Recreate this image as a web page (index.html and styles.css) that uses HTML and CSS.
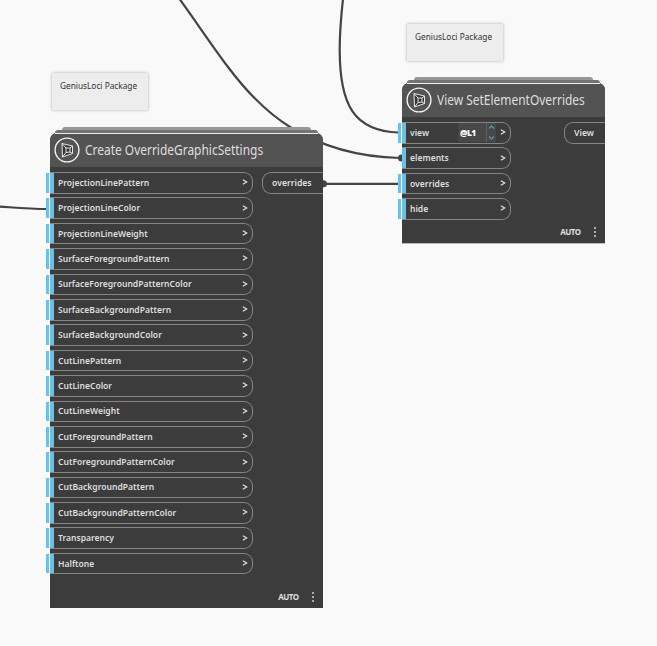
FILE: index.html
```
<!DOCTYPE html>
<html lang="en">
<head>
<meta charset="utf-8">
<title>Graph workspace</title>
<link rel="stylesheet" href="styles.css">
</head>
<body>
<main class="canvas">
<svg class="wires" width="657" height="646" viewBox="0 0 657 646">
<path d="M179.500 -1C195 20 212 46 228 67C246 91 266 112 290 127C322 147 358 157 400 158"/>
<path d="M343 -1C341 17 339.7 33 339.7 50C339.7 105 354 131 399 132.500"/>
<path d="M-1 206.500C14 207.500 29 209 47 209"/>
<path d="M324 183.800H399"/>
<circle cx="323.500" cy="183.800" r="3.500"/>
<circle cx="401.500" cy="158" r="3.500"/>
</svg>
<aside class="note note-left"><span>GeniusLoci Package</span></aside>
<aside class="note note-right"><span>GeniusLoci Package</span></aside>

<section class="node settings">
<header><svg class="logo" viewBox="0 0 26 26"><use href="#package"/></svg><h2>Create OverrideGraphicSettings</h2></header>
<div class="body">
<ul class="inputs">
<li><span>ProjectionLinePattern</span><svg class="chev" viewBox="0 0 6 7"><path d="M.5 1L5 3.500L.5 6"/></svg></li>
<li><span>ProjectionLineColor</span><svg class="chev" viewBox="0 0 6 7"><path d="M.5 1L5 3.500L.5 6"/></svg></li>
<li><span>ProjectionLineWeight</span><svg class="chev" viewBox="0 0 6 7"><path d="M.5 1L5 3.500L.5 6"/></svg></li>
<li><span>SurfaceForegroundPattern</span><svg class="chev" viewBox="0 0 6 7"><path d="M.5 1L5 3.500L.5 6"/></svg></li>
<li><span>SurfaceForegroundPatternColor</span><svg class="chev" viewBox="0 0 6 7"><path d="M.5 1L5 3.500L.5 6"/></svg></li>
<li><span>SurfaceBackgroundPattern</span><svg class="chev" viewBox="0 0 6 7"><path d="M.5 1L5 3.500L.5 6"/></svg></li>
<li><span>SurfaceBackgroundColor</span><svg class="chev" viewBox="0 0 6 7"><path d="M.5 1L5 3.500L.5 6"/></svg></li>
<li><span>CutLinePattern</span><svg class="chev" viewBox="0 0 6 7"><path d="M.5 1L5 3.500L.5 6"/></svg></li>
<li><span>CutLineColor</span><svg class="chev" viewBox="0 0 6 7"><path d="M.5 1L5 3.500L.5 6"/></svg></li>
<li><span>CutLineWeight</span><svg class="chev" viewBox="0 0 6 7"><path d="M.5 1L5 3.500L.5 6"/></svg></li>
<li><span>CutForegroundPattern</span><svg class="chev" viewBox="0 0 6 7"><path d="M.5 1L5 3.500L.5 6"/></svg></li>
<li><span>CutForegroundPatternColor</span><svg class="chev" viewBox="0 0 6 7"><path d="M.5 1L5 3.500L.5 6"/></svg></li>
<li><span>CutBackgroundPattern</span><svg class="chev" viewBox="0 0 6 7"><path d="M.5 1L5 3.500L.5 6"/></svg></li>
<li><span>CutBackgroundPatternColor</span><svg class="chev" viewBox="0 0 6 7"><path d="M.5 1L5 3.500L.5 6"/></svg></li>
<li><span>Transparency</span><svg class="chev" viewBox="0 0 6 7"><path d="M.5 1L5 3.500L.5 6"/></svg></li>
<li><span>Halftone</span><svg class="chev" viewBox="0 0 6 7"><path d="M.5 1L5 3.500L.5 6"/></svg></li>
</ul>
<div class="output"><span>overrides</span></div>
</div>
<footer><span>AUTO</span><i class="dots"></i></footer>
</section>

<section class="node view">
<header><svg class="logo" viewBox="0 0 26 26"><g id="package"><circle cx="13" cy="13" r="11.900" fill="none" stroke="#f2f2f2" stroke-width="1.400"/><path d="M8 6.500L18.500 9V16.500L8.500 20ZM8 6.500L12 11M8.500 20L12 15.500M18.500 9L16 11M18.500 16.500L16 15M12 11H16V15L12 15.500Z" fill="#333" stroke="#e6e6e6" stroke-width="1" stroke-linejoin="round"/></g></svg><h2>View SetElementOverrides</h2></header>
<div class="body">
<ul class="inputs">
<li><span>view</span><div class="level"><b>@L1</b><svg viewBox="0 0 9 18"><path d="M2 5L4.500 2.500L7 5M2 13L4.500 15.500L7 13"/></svg></div><svg class="chev" viewBox="0 0 6 7"><path d="M.5 1L5 3.500L.5 6"/></svg></li>
<li class="joined"><span>elements</span><svg class="chev" viewBox="0 0 6 7"><path d="M.5 1L5 3.500L.5 6"/></svg></li>
<li><span>overrides</span><svg class="chev" viewBox="0 0 6 7"><path d="M.5 1L5 3.500L.5 6"/></svg></li>
<li><span>hide</span><svg class="chev" viewBox="0 0 6 7"><path d="M.5 1L5 3.500L.5 6"/></svg></li>
</ul>
<div class="output"><span>View</span></div>
</div>
<footer><span>AUTO</span><i class="dots"></i></footer>
</section>
</main>
</body>
</html>
```
FILE: styles.css
```
* { box-sizing: border-box; }
body { margin: 0; background: #f9f9f9; font-family: "Noto Sans", "Open Sans", sans-serif; }
.canvas { position: relative; width: 657px; height: 646px; overflow: hidden; }
.wires { position: absolute; inset: 0; }
.wires path { fill: none; stroke: #444; stroke-width: 2.2; }
.wires circle { fill: #444; }
.note { position: absolute; width: 96px; height: 37px; padding: 6px 8px; background: #ededed; box-shadow: 0 0 3px #aaa; font-size: 9px; line-height: 13px; color: #333; white-space: nowrap; }
.note span { display: inline-block; transform: scaleX(.92); transform-origin: left; }
.note-left { left: 52px; top: 73px; }
.note-right { left: 407px; top: 24px; }
.node { position: absolute; display: flex; flex-direction: column; background: #3c3c3c; color: #dfdfdf; border-radius: 7px 7px 0 0; }
.settings { left: 50px; top: 133px; width: 273px; height: 475px; }
.view { left: 402px; top: 83px; width: 203px; height: 160px; box-shadow: 0 1px #bbb; }
.node::before, .node::after { content: ""; position: absolute; }
.node::before { left: 12px; right: 12px; top: -6px; height: 3px; background: #979797; border-radius: 3px 3px 0 0; }
.node::after { left: 5px; right: 5px; top: -3px; height: 3px; background: #737373; border-bottom: 1px solid #eee; border-radius: 3px 3px 0 0; }
header { height: 34px; flex: none; display: flex; align-items: center; gap: 4.500px; padding-left: 4px; background: #535353; border-radius: 7px 7px 0 0; }
.logo { width: 26px; height: 26px; flex: none; }
h2 { margin: 0; font-size: 13.500px; line-height: 18px; font-weight: 400; white-space: nowrap; transform: scaleX(.885); transform-origin: left; }
.body { flex: 1; display: flex; justify-content: space-between; align-items: flex-start; padding-top: 5px; }
.inputs { list-style: none; margin: 0; padding: 0; width: 203px; display: flex; flex-direction: column; gap: 3.800px; }
.view .inputs { width: 109px; }
li { position: relative; height: 21.600px; display: flex; align-items: center; padding: 0 4px 0 8px; border: 1px solid #858585; border-left: 0; border-radius: 0 9px 9px 0; font-size: 9px; font-weight: 600; line-height: 12px; }
li::before { content: ""; position: absolute; left: -4px; top: 0; bottom: 0; width: 8px; background: linear-gradient(90deg, #68c1e9 3px, #f9f9f9 3px 4px, #68c1e9 4px); }
li.joined::before { left: 0; width: 4px; background: #68c1e9; }
li > span { white-space: nowrap; transform: scaleX(.95); transform-origin: left; }
.chev { width: 6px; height: 6px; margin-left: auto; position: relative; top: -.5px; }
.chev path { fill: none; stroke: #e6e6e6; stroke-width: 1.300; }
.output { height: 21.600px; width: 61px; display: flex; align-items: center; padding-left: 9px; border: 1px solid #858585; border-right: 0; border-radius: 9px 0 0 9px; font-size: 9.300px; font-weight: 600; }
.output span { transform: scaleX(.93); transform-origin: left; }
.view .output { width: 41px; }
.level { position: absolute; left: 56px; top: 0; width: 38px; height: 19px; display: flex; align-items: center; background: #484848; padding-left: 2px; }
.level b { width: 26px; font-size: 8.500px; color: #fff; letter-spacing: -.6px; }
.level svg { width: 10px; height: 19px; border-left: 1px solid #606060; flex: none; }
.level path { fill: none; stroke: #559fbd; stroke-width: 1.100; }
footer { height: 22px; display: flex; align-items: center; justify-content: flex-end; gap: 13px; padding-right: 9.500px; font-size: 8px; font-weight: 700; line-height: 10px; letter-spacing: -.5px; }
.dots { width: 2px; height: 10px; background: linear-gradient(#aaa 2px, transparent 2px 4px, #aaa 4px 6px, transparent 6px 8px, #aaa 8px); }
```
